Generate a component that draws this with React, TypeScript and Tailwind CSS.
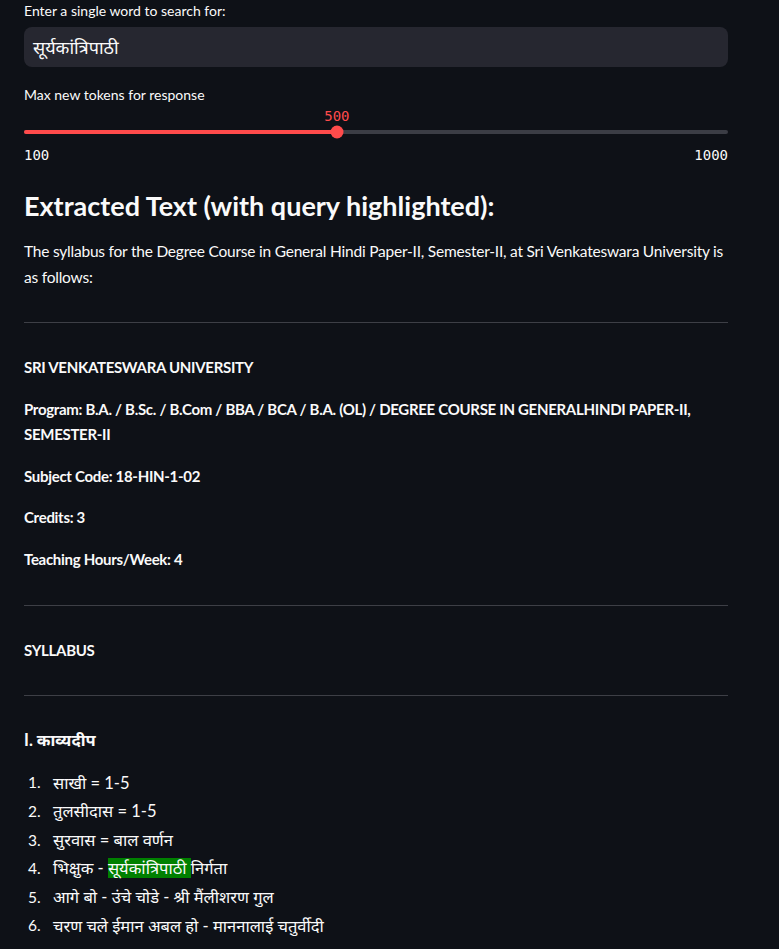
const body = '"Lato", "Noto Sans Devanagari", "Noto Sans", sans-serif';
const mono = '"DejaVu Sans Mono", "Liberation Mono", monospace';

const items: { n: number; parts: (string | { hl: string })[] }[] = [
  { n: 1, parts: ['साखी = 1-5'] },
  { n: 2, parts: ['तुलसीदास = 1-5'] },
  { n: 3, parts: ['सुरवास = बाल वर्णन'] },
  { n: 4, parts: ['भिक्षुक - ', { hl: 'सूर्यकांत्रिपाठी ' }, 'निर्गता'] },
  { n: 5, parts: ['आगे बो - उंचे चोडे - श्री मैंलीशरण गुल'] },
  { n: 6, parts: ['चरण चले ईमान अबल हो - माननालाई चतुर्वीदी'] },
];

function Slider({ min, max, value }: { min: number; max: number; value: number }) {
  const pct = ((value - min) / (max - min)) * 100;
  return (
    <div>
      <div className="relative h-[20px]">
        <span
          className="absolute -translate-x-1/2 text-[14px] leading-[20px] text-[#ff4b4b]"
          style={{ left: `${pct}%`, fontFamily: mono }}
        >
          {value}
        </span>
      </div>
      <div className="relative mt-[4px] h-[4px] rounded-full bg-[#3b3d45]">
        <div className="h-full rounded-full bg-[#ff4b4b]" style={{ width: `${pct}%` }} />
        <div
          className="absolute top-1/2 h-[13px] w-[13px] -translate-x-1/2 -translate-y-1/2 rounded-full bg-[#ff4b4b]"
          style={{ left: `${pct}%` }}
        />
      </div>
      <div
        className="mt-[11px] flex justify-between text-[14px] leading-[20px] text-[#fafafa]"
        style={{ fontFamily: mono }}
      >
        <span>{min}</span>
        <span>{max}</span>
      </div>
    </div>
  );
}

function Rule() {
  return <hr className="my-[32px] border-t border-[#3d3f46]" />;
}

export default function App() {
  return (
    <div className="min-h-screen bg-[#0e1117] text-[#fafafa]" style={{ fontFamily: body }}>
      <div className="ml-[24px] w-[704px] pb-10">
        <label className="block text-[14px] leading-[22px]">Enter a single word to search for:</label>
        <div className="mt-[5px] flex h-[40px] items-center rounded-[8px] bg-[#262730] pl-[9px] text-[18px]">
          सूर्यकांत्रिपाठी
        </div>

        <div className="mt-[17px] text-[14px] leading-[22px]">Max new tokens for response</div>
        <Slider min={100} max={1000} value={500} />

        <h3 className="mt-[24px] text-[27px] font-bold leading-[34px]">
          Extracted Text (with query highlighted):
        </h3>

        <p className="mt-[15px] text-[15.5px] leading-[26px] tracking-[-0.22px]">
          The syllabus for the Degree Course in General Hindi Paper-II, Semester-II, at Sri Venkateswara University is
          as follows:
        </p>

        <Rule />

        <div className="flex flex-col gap-[16px] text-[15px] font-bold leading-[25.6px] tracking-[-0.3px]">
          <p>SRI VENKATESWARA UNIVERSITY</p>
          <p>
            Program: B.A. / B.Sc. / B.Com / BBA / BCA / B.A. (OL) / DEGREE COURSE IN GENERALHINDI PAPER-II,
            SEMESTER-II
          </p>
          <p>Subject Code: 18-HIN-1-02</p>
          <p>Credits: 3</p>
          <p>Teaching Hours/Week: 4</p>
        </div>

        <Rule />

        <p className="text-[15px] font-bold leading-[25.6px] tracking-[-0.3px]">SYLLABUS</p>

        <Rule />

        <p className="text-[16.5px] font-bold leading-[25.6px]">I. काव्यदीप</p>

        <ol className="mt-[15px] text-[16.5px]">
          {items.map((it) => (
            <li key={it.n} className="flex h-[28.6px] items-center">
              <span className="w-[29px] pl-[4px] text-[15.5px]">{it.n}.</span>
              <span>
                {it.parts.map((p, i) =>
                  typeof p === 'string' ? (
                    <span key={i}>{p}</span>
                  ) : (
                    <span key={i} className="bg-[#008000]">
                      {p.hl}
                    </span>
                  )
                )}
              </span>
            </li>
          ))}
        </ol>
      </div>
    </div>
  );
}
